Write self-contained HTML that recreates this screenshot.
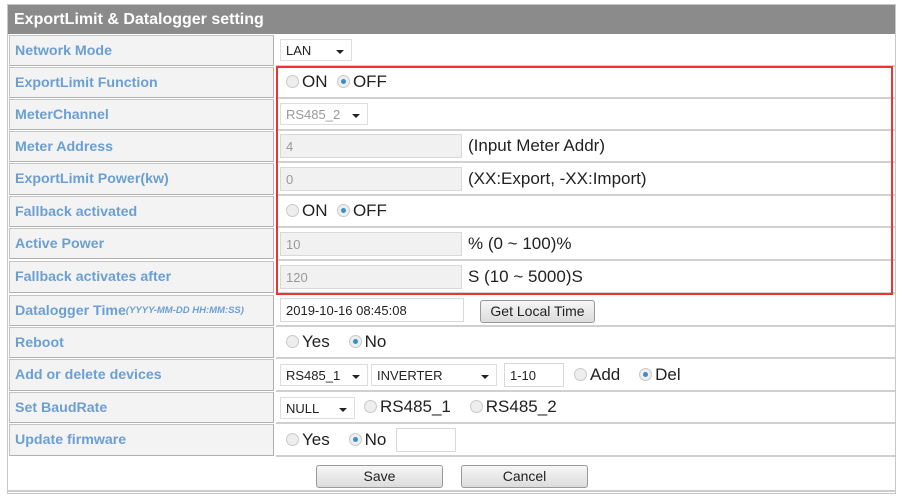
<!DOCTYPE html>
<html><head><meta charset="utf-8"><style>
body{margin:0;width:908px;height:502px;background:#fff;position:relative;overflow:hidden;font-family:"Liberation Sans",Arial,sans-serif}
.frame{position:absolute;left:7px;top:4px;width:889px;height:490px;border:1px solid #c8c8c8;box-sizing:border-box}
.hdr{position:absolute;left:8px;top:5px;width:887px;height:29px;background:#8b8b8b;color:#fff;font-weight:bold;font-size:16px;line-height:29px;padding-left:6px;box-sizing:border-box}
.lab{position:absolute;left:9px;width:265px;background:#f3f3f3;border:1px solid #c4c4c4;border-right-color:#b0b0b0;border-bottom-color:#b0b0b0;box-sizing:border-box;color:#6b9fd3;font-weight:bold;font-size:14.2px;padding-left:5px;display:flex;align-items:center}
.val{position:absolute;left:276px;width:619px;background:#fff;border-bottom:2px solid #d0d0d0;box-sizing:border-box;font-size:17px;color:#222}
.it{position:absolute;top:50%;transform:translateY(-50%);white-space:nowrap}
.sel{position:absolute;border:1px solid #ddd;background:#fff;font-size:13px;color:#222;height:22px;line-height:22px;padding-left:5px;box-sizing:border-box}
.sel:after{content:"";position:absolute;right:7px;top:10px;border-left:4px solid transparent;border-right:4px solid transparent;border-top:4px solid #222}
.inp{position:absolute;border:1px solid #d8d8d8;background:#f1f1f1;font-size:13px;color:#999;height:24px;line-height:24px;padding-left:5px;box-sizing:border-box}
.w{background:#fff;color:#222}
.r{display:inline-block;width:13px;height:13px;border-radius:50%;border:1px solid #c8c8c8;background:#eee;box-sizing:border-box;vertical-align:-1px;margin-right:3px;position:relative}
.r.on:after{content:"";position:absolute;left:3px;top:3px;width:5px;height:5px;border-radius:50%;background:#3a8fc9}
.btn{position:absolute;border:1px solid #999;border-radius:3px;background:linear-gradient(#f6f6f6,#dcdcdc);font-size:14px;color:#222;text-align:center;height:23px;line-height:21px;box-sizing:border-box}
.red{position:absolute;left:276px;top:66px;width:617px;height:229px;border:2px solid #e33;box-sizing:border-box}
</style></head><body>
<div class="frame"></div>
<div class="hdr">ExportLimit &amp; Datalogger setting</div>

<div class="lab" style="top:35px;height:31px">Network Mode</div>
<div class="val" style="top:35px;height:32px"><div class="sel" style="left:4px;top:4px;width:72px">LAN</div></div>

<div class="lab" style="top:67px;height:31px">ExportLimit Function</div>
<div class="val" style="top:67px;height:32px"><div class="it" style="left:10px"><span class="r"></span>ON&nbsp; <span class="r on"></span>OFF</div></div>

<div class="lab" style="top:99px;height:31px">MeterChannel</div>
<div class="val" style="top:99px;height:32px"><div class="sel" style="left:4px;top:4px;width:88px;color:#999">RS485_2</div></div>

<div class="lab" style="top:131px;height:31px">Meter Address</div>
<div class="val" style="top:131px;height:32px"><div class="inp" style="left:4px;top:3px;width:182px">4</div><div class="it" style="left:192px">(Input Meter Addr)</div></div>

<div class="lab" style="top:163px;height:32px">ExportLimit Power(kw)</div>
<div class="val" style="top:163px;height:33px"><div class="inp" style="left:4px;top:4px;width:182px">0</div><div class="it" style="left:192px">(XX:Export, -XX:Import)</div></div>

<div class="lab" style="top:196px;height:31px">Fallback activated</div>
<div class="val" style="top:196px;height:32px"><div class="it" style="left:10px"><span class="r"></span>ON&nbsp; <span class="r on"></span>OFF</div></div>

<div class="lab" style="top:228px;height:31px">Active Power</div>
<div class="val" style="top:228px;height:33px"><div class="inp" style="left:4px;top:4px;width:182px">10</div><div class="it" style="left:192px">% (0 ~ 100)%</div></div>

<div class="lab" style="top:261px;height:32px">Fallback activates after</div>
<div class="val" style="top:261px;height:33px"><div class="inp" style="left:4px;top:4px;width:182px">120</div><div class="it" style="left:192px">S (10 ~ 5000)S</div></div>

<div class="lab" style="top:295px;height:31px">Datalogger Time<i style="font-size:9.5px">(YYYY-MM-DD HH:MM:SS)</i></div>
<div class="val" style="top:295px;height:32px"><div class="inp w" style="left:4px;top:3px;width:184px">2019-10-16 08:45:08</div><div class="btn" style="left:204px;top:5px;width:115px">Get Local Time</div></div>

<div class="lab" style="top:327px;height:31px">Reboot</div>
<div class="val" style="top:327px;height:32px"><div class="it" style="left:10px"><span class="r"></span>Yes&nbsp;&nbsp;&nbsp; <span class="r on"></span>No</div></div>

<div class="lab" style="top:359px;height:32px">Add or delete devices</div>
<div class="val" style="top:359px;height:33px"><div class="sel" style="left:4px;top:5px;width:88px">RS485_1</div><div class="sel" style="left:95px;top:5px;width:126px">INVERTER</div><div class="inp w" style="left:228px;top:4px;width:60px">1-10</div><div class="it" style="left:298px"><span class="r"></span>Add&nbsp;&nbsp;&nbsp; <span class="r on"></span>Del</div></div>

<div class="lab" style="top:392px;height:31px">Set BaudRate</div>
<div class="val" style="top:392px;height:32px"><div class="sel" style="left:4px;top:5px;width:75px">NULL</div><div class="it" style="left:88px"><span class="r"></span>RS485_1&nbsp;&nbsp;&nbsp; <span class="r"></span>RS485_2</div></div>

<div class="lab" style="top:424px;height:32px">Update firmware</div>
<div class="val" style="top:424px;height:33px"><div class="it" style="left:10px"><span class="r"></span>Yes&nbsp;&nbsp;&nbsp; <span class="r on"></span>No</div><div class="inp w" style="left:120px;top:4px;width:60px"></div></div>

<div style="position:absolute;left:8px;top:458px;width:887px;height:34px;border-bottom:2px solid #ccc;box-sizing:border-box"></div>
<div class="btn" style="left:316px;top:465px;width:127px">Save</div>
<div class="btn" style="left:461px;top:465px;width:127px">Cancel</div>

<div class="red"></div>
</body></html>
